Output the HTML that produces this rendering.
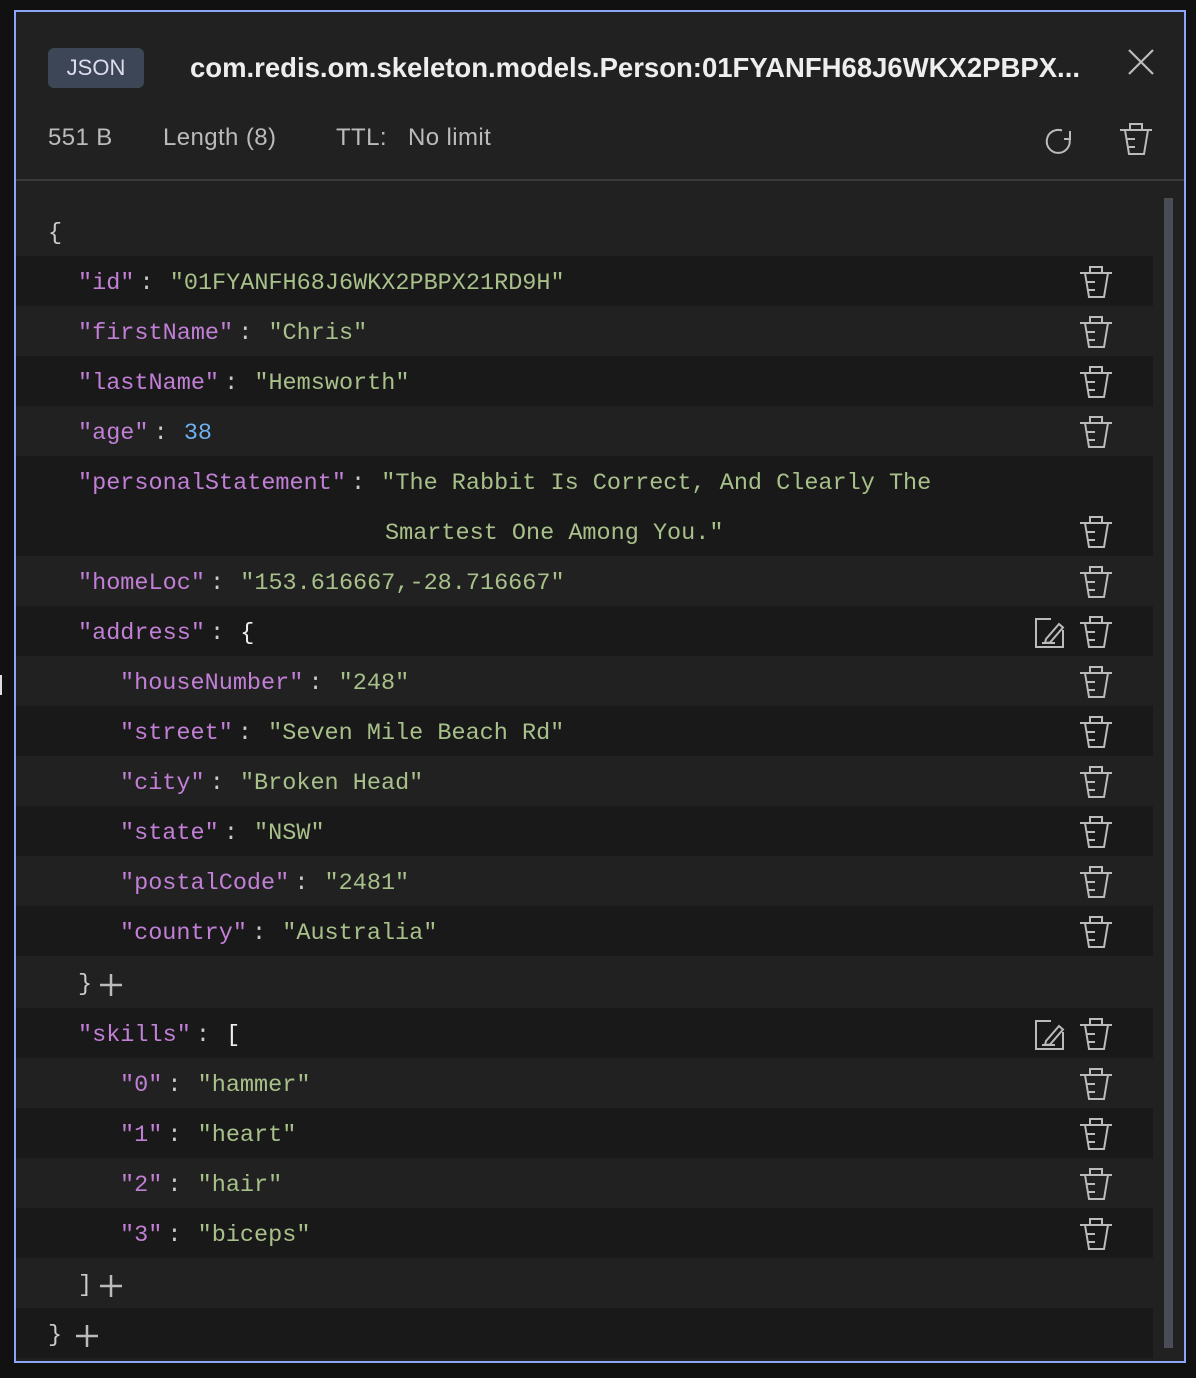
<!DOCTYPE html>
<html><head><meta charset="utf-8"><style>
*{margin:0;padding:0;box-sizing:border-box}
body{width:1196px;height:1378px;background:#111;position:relative;overflow:hidden;font-family:"Liberation Sans",sans-serif}
#panel{position:absolute;left:14px;top:10px;width:1172px;height:1353px;border:2px solid #8ea4f7;background:#212121;overflow:hidden}
.abs{position:absolute}
.badge{left:32px;top:36px;width:96px;height:40px;background:#3d4656;border-radius:6px;color:#dde;font-size:22px;line-height:40px;text-align:center}
.title{left:174px;top:38px;color:#eee;font-size:27.5px;font-weight:bold;line-height:36px;letter-spacing:0px}
.meta{top:108px;color:#bbb;font-size:24px;line-height:36px;letter-spacing:0.4px}
.div{left:0;top:167px;width:1172px;height:2px;background:#3a3a3a}
.scroll{left:1148px;top:186px;width:9px;height:1150px;background:#4a4d55}
.row{position:absolute;left:0;width:1137px;height:50px;font-family:"Liberation Mono",monospace;font-size:23.5px;line-height:50px;color:#ccc;white-space:pre}
.d{background:#191919}
.k{color:#c17fd6}.s{color:#a8c08a}.n{color:#6fb0ef}
.row .t{position:absolute;top:3px}
.c{margin:0 2px 0 -9px}
.ic{position:absolute}
</style></head><body>
<div class="abs" style="left:0;top:675px;width:2px;height:20px;background:#ddd"></div>
<div id="panel">
<div class="abs badge">JSON</div>
<div class="abs title">com.redis.om.skeleton.models.Person:01FYANFH68J6WKX2PBPX...</div>
<svg class="abs" style="left:1110px;top:35px" width="30" height="30"><path d="M3 3L27 27M27 3L3 27" stroke="#bbb" stroke-width="2.2"/></svg>
<div class="abs meta" style="left:32px">551 B</div>
<div class="abs meta" style="left:147px">Length (8)</div>
<div class="abs meta" style="left:320px">TTL:</div>
<div class="abs meta" style="left:392px">No limit</div>
<svg class="abs" style="left:1028px;top:112px" width="32" height="32"><path d="M26 7 V15 H20" fill="none" stroke="#bbb" stroke-width="2"/><path d="M25.5 15 A11.5 11.5 0 1 1 18 6.5" fill="none" stroke="#bbb" stroke-width="2"/></svg>
<svg class="abs" style="left:1104px;top:110px" width="34" height="34"><g fill="none" stroke="#bbb" stroke-width="2"><rect x="10" y="2" width="12" height="6"/><path d="M0 8H32M5 8L9 32H24L28 8M7 17H15M8 25H15"/></g></svg>
<div class="abs div"></div>
<div class="abs scroll"></div>

<div class="row" style="top:194px"><span class="t" style="left:32px">{</span></div>
<div class="row d" style="top:244px"><span class="t" style="left:62px"><span class="k">"id"</span><span class="c"> : </span><span class="s">"01FYANFH68J6WKX2PBPX21RD9H"</span></span></div>
<div class="row" style="top:294px"><span class="t" style="left:62px"><span class="k">"firstName"</span><span class="c"> : </span><span class="s">"Chris"</span></span></div>
<div class="row d" style="top:344px"><span class="t" style="left:62px"><span class="k">"lastName"</span><span class="c"> : </span><span class="s">"Hemsworth"</span></span></div>
<div class="row" style="top:394px"><span class="t" style="left:62px"><span class="k">"age"</span><span class="c"> : </span><span class="n">38</span></span></div>
<div class="row d" style="top:444px;height:100px"><span class="t" style="left:62px"><span class="k">"personalStatement"</span><span class="c"> : </span><span class="s">"The Rabbit Is Correct, And Clearly The</span></span><span class="t s" style="left:369px;top:53px">Smartest One Among You."</span></div>
<div class="row" style="top:544px"><span class="t" style="left:62px"><span class="k">"homeLoc"</span><span class="c"> : </span><span class="s">"153.616667,-28.716667"</span></span></div>
<div class="row d" style="top:594px"><span class="t" style="left:62px"><span class="k">"address"</span><span class="c"> : </span><span style="color:#eee">{</span></span></div>
<div class="row" style="top:644px"><span class="t" style="left:104px"><span class="k">"houseNumber"</span><span class="c"> : </span><span class="s">"248"</span></span></div>
<div class="row d" style="top:694px"><span class="t" style="left:104px"><span class="k">"street"</span><span class="c"> : </span><span class="s">"Seven Mile Beach Rd"</span></span></div>
<div class="row" style="top:744px"><span class="t" style="left:104px"><span class="k">"city"</span><span class="c"> : </span><span class="s">"Broken Head"</span></span></div>
<div class="row d" style="top:794px"><span class="t" style="left:104px"><span class="k">"state"</span><span class="c"> : </span><span class="s">"NSW"</span></span></div>
<div class="row" style="top:844px"><span class="t" style="left:104px"><span class="k">"postalCode"</span><span class="c"> : </span><span class="s">"2481"</span></span></div>
<div class="row d" style="top:894px"><span class="t" style="left:104px"><span class="k">"country"</span><span class="c"> : </span><span class="s">"Australia"</span></span></div>
<div class="row" style="top:945px"><span class="t" style="left:62px">}</span></div>
<div class="row d" style="top:996px"><span class="t" style="left:62px"><span class="k">"skills"</span><span class="c"> : </span><span style="color:#eee">[</span></span></div>
<div class="row" style="top:1046px"><span class="t" style="left:104px"><span class="k">"0"</span><span class="c"> : </span><span class="s">"hammer"</span></span></div>
<div class="row d" style="top:1096px"><span class="t" style="left:104px"><span class="k">"1"</span><span class="c"> : </span><span class="s">"heart"</span></span></div>
<div class="row" style="top:1146px"><span class="t" style="left:104px"><span class="k">"2"</span><span class="c"> : </span><span class="s">"hair"</span></span></div>
<div class="row d" style="top:1196px"><span class="t" style="left:104px"><span class="k">"3"</span><span class="c"> : </span><span class="s">"biceps"</span></span></div>
<div class="row" style="top:1246px"><span class="t" style="left:62px">]</span></div>
<div class="row d" style="top:1296px"><span class="t" style="left:32px">}</span></div>

<svg class="abs" style="left:0;top:0" width="1172" height="1353">
<defs>
<g id="tr" fill="none" stroke="#bbb" stroke-width="2"><rect x="10" y="2" width="12" height="6"/><path d="M0 8H32M5 8L9 32H24L28 8M7 17H15M8 25H15"/></g>
<g id="ed" fill="none" stroke="#bbb" stroke-width="2"><path d="M28 12V29H1V1H16"/><path d="M11 21L24 6L28 9.5L15 24.5L10 25Z"/><path d="M7 25H20"/></g>
<path id="pl" d="M0 11H22M11 0V22" stroke="#bbb" stroke-width="2.5"/>
</defs>
<use href="#tr" x="1064" y="253"/>
<use href="#tr" x="1064" y="303"/>
<use href="#tr" x="1064" y="353"/>
<use href="#tr" x="1064" y="403"/>
<use href="#tr" x="1064" y="503"/>
<use href="#tr" x="1064" y="553"/>
<use href="#tr" x="1064" y="603"/>
<use href="#ed" x="1019" y="606"/>
<use href="#tr" x="1064" y="653"/>
<use href="#tr" x="1064" y="703"/>
<use href="#tr" x="1064" y="753"/>
<use href="#tr" x="1064" y="803"/>
<use href="#tr" x="1064" y="853"/>
<use href="#tr" x="1064" y="903"/>
<use href="#tr" x="1064" y="1005"/>
<use href="#ed" x="1019" y="1008"/>
<use href="#tr" x="1064" y="1055"/>
<use href="#tr" x="1064" y="1105"/>
<use href="#tr" x="1064" y="1155"/>
<use href="#tr" x="1064" y="1205"/>
<use href="#pl" x="84" y="962"/>
<use href="#pl" x="84" y="1263"/>
<use href="#pl" x="60" y="1313"/>
</svg>
</div>
</body></html>
